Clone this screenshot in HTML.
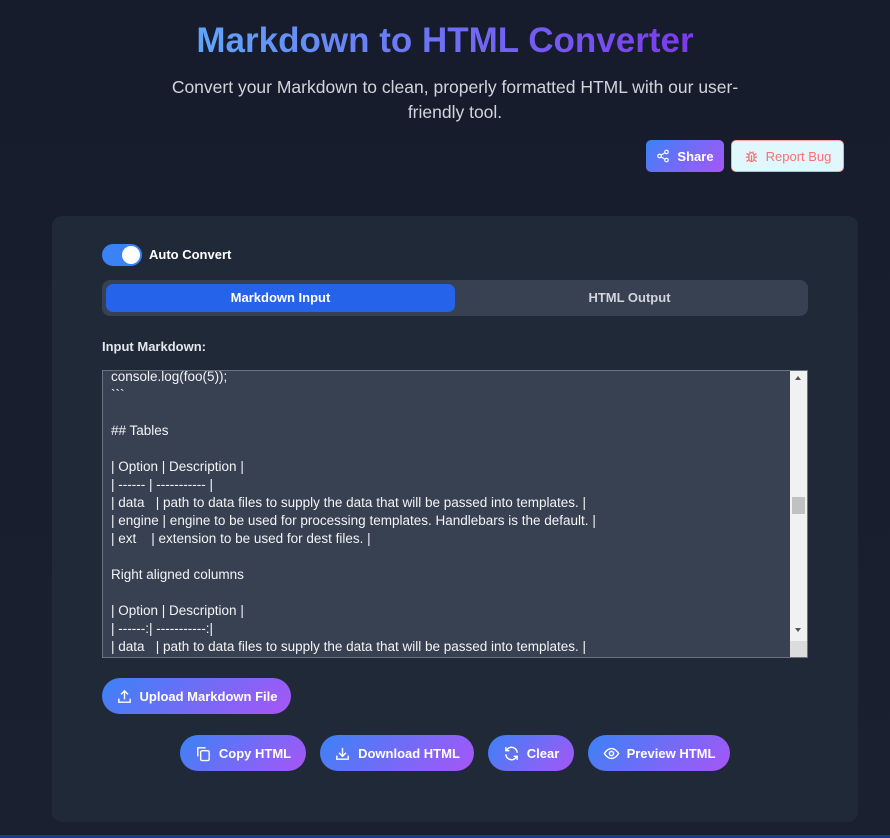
<!DOCTYPE html>
<html><head><meta charset="utf-8"><style>
*{box-sizing:border-box;margin:0;padding:0}
body{width:890px;height:838px;overflow:hidden;background:linear-gradient(180deg,#161c2b 0%,#1a2030 100%);font-family:"Liberation Sans",sans-serif;position:relative;color:#fff}
h1{position:absolute;top:21px;left:0;width:890px;text-align:center;font-size:35px;font-weight:bold;letter-spacing:0}
h1 span{background:linear-gradient(90deg,#60a5fa,#7c3aed);-webkit-background-clip:text;background-clip:text;color:transparent}
.sub{position:absolute;top:75px;left:150px;width:610px;text-align:center;font-size:17.5px;line-height:25px;color:#d1d5db}
.btn{position:absolute;display:flex;align-items:center;justify-content:center;gap:7px;font-weight:bold;font-size:13px;color:#fff;background:linear-gradient(135deg,#3b82f6,#a855f7)}
.card{position:absolute;left:52px;top:216px;width:806px;height:606px;background:#1f2937;border-radius:10px}
.tog{position:absolute;left:102px;top:244px;width:40px;height:22px;border-radius:11px;background:#3b82f6}
.tog i{position:absolute;right:2px;top:2px;width:18px;height:18px;border-radius:50%;background:#fff}
.tabs{position:absolute;left:102px;top:280px;width:706px;height:36px;background:#374151;border-radius:8px}
.ta{position:absolute;left:102px;top:370px;width:706px;height:288px;background:#374151;border:1px solid #6b7280;overflow:hidden}
.ta pre{position:absolute;left:8px;top:-3px;font-family:"Liberation Sans",sans-serif;font-size:13.5px;line-height:18px;color:#f3f4f6;white-space:pre}
.sb{position:absolute;right:0;top:0;width:17px;height:286px;background:#f1f1f1}
</style></head><body>
<h1><span>Markdown to HTML Converter</span></h1>
<div class="sub">Convert your Markdown to clean, properly formatted HTML with our user-friendly tool.</div>
<div class="btn" style="left:646px;top:140px;width:78px;height:32px;border-radius:5px"><svg width="14" height="14" viewBox="0 0 24 24" fill="none" stroke="#fff" stroke-width="2"><circle cx="18" cy="5" r="3"/><circle cx="6" cy="12" r="3"/><circle cx="18" cy="19" r="3"/><path d="M8.6 13.5l6.8 4M15.4 6.5l-6.8 4"/></svg>Share</div>
<div class="btn" style="left:731px;top:140px;width:113px;height:32px;border-radius:5px;background:#e0f7fb;border:1px solid #f8a5a5;color:#f87171;font-weight:normal"><svg width="15" height="15" viewBox="0 0 24 24" fill="none" stroke="#f87171" stroke-width="2"><rect x="8" y="6" width="8" height="14" rx="4"/><path d="M12 10v10M3 13h5M16 13h5M4 7l4 3M20 7l-4 3M4 20l4-3M20 20l-4-3M9 4l1 2M15 4l-1 2"/></svg>Report Bug</div>
<div class="card"></div>
<div class="tog"><i></i></div>
<div style="position:absolute;left:149px;top:247px;font-size:13px;font-weight:bold">Auto Convert</div>
<div class="tabs">
<div style="position:absolute;left:4px;top:4px;width:349px;height:28px;background:#2563eb;border-radius:7px;text-align:center;line-height:28px;font-size:13px;font-weight:bold">Markdown Input</div>
<div style="position:absolute;left:353px;top:4px;width:349px;height:28px;text-align:center;line-height:28px;font-size:13px;font-weight:bold;color:#d1d5db">HTML Output</div>
</div>
<div style="position:absolute;left:102px;top:339px;font-size:13px;font-weight:bold;color:#e5e7eb">Input Markdown:</div>
<div class="ta"><pre>console.log(foo(5));
&#96;&#96;&#96;

## Tables

| Option | Description |
| ------ | ----------- |
| data   | path to data files to supply the data that will be passed into templates. |
| engine | engine to be used for processing templates. Handlebars is the default. |
| ext    | extension to be used for dest files. |

Right aligned columns

| Option | Description |
| ------:| -----------:|
| data   | path to data files to supply the data that will be passed into templates. |</pre>
<div class="sb"><div style="position:absolute;left:5px;top:5px;border:3px solid transparent;border-bottom:4px solid #555;border-top:0"></div><div style="position:absolute;left:2px;top:126px;width:13px;height:17px;background:#c1c1c1"></div><div style="position:absolute;left:5px;top:257px;border:3px solid transparent;border-top:4px solid #555;border-bottom:0"></div><div style="position:absolute;left:0;top:270px;width:17px;height:16px;background:#dcdcdc"></div></div>
</div>
<div class="btn" style="left:102px;top:678px;width:189px;height:36px;border-radius:18px"><svg width="17" height="17" viewBox="0 0 24 24" fill="none" stroke="#fff" stroke-width="2"><path d="M4 15v5h16v-5M12 16V4M7 9l5-5 5 5"/></svg>Upload Markdown File</div>
<div class="btn" style="left:180px;top:735px;width:126px;height:36px;border-radius:18px"><svg width="17" height="17" viewBox="0 0 24 24" fill="none" stroke="#fff" stroke-width="2"><rect x="8" y="8" width="12" height="14" rx="2"/><path d="M4 16V4h11"/></svg>Copy HTML</div>
<div class="btn" style="left:320px;top:735px;width:154px;height:36px;border-radius:18px"><svg width="17" height="17" viewBox="0 0 24 24" fill="none" stroke="#fff" stroke-width="2"><path d="M4 15v5h16v-5M12 4v12M7 11l5 5 5-5"/></svg>Download HTML</div>
<div class="btn" style="left:488px;top:735px;width:86px;height:36px;border-radius:18px"><svg width="17" height="17" viewBox="0 0 24 24" fill="none" stroke="#fff" stroke-width="2"><path d="M20 11A8 8 0 0 0 6 6L4 8M4 3v5h5M4 13a8 8 0 0 0 14 5l2-2M20 21v-5h-5"/></svg>Clear</div>
<div class="btn" style="left:588px;top:735px;width:142px;height:36px;border-radius:18px"><svg width="17" height="17" viewBox="0 0 24 24" fill="none" stroke="#fff" stroke-width="2"><path d="M2 12s4-7 10-7 10 7 10 7-4 7-10 7S2 12 2 12z"/><circle cx="12" cy="12" r="3"/></svg>Preview HTML</div>
<div style="position:absolute;left:0;top:835px;width:890px;height:3px;background:#1e3a8a"></div>
</body></html>
